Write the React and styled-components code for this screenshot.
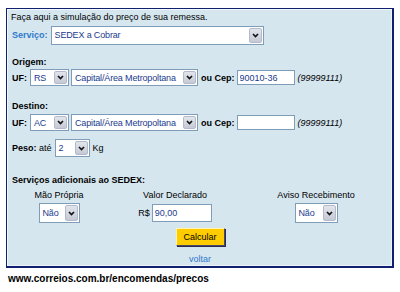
import React from 'react'
import styled, { createGlobalStyle } from 'styled-components'

const GlobalStyle = createGlobalStyle`
  body {
    margin: 0;
    background: #fff;
    font-family: "Liberation Sans", Arial, sans-serif;
    font-size: 9px;
    color: #000;
  }
`

const Chevron = () => (
  <svg width="7" height="5" viewBox="0 0 7 5">
    <path d="M1 1 L3.5 3.6 L6 1" fill="none" stroke="#111" strokeWidth="1.6" />
  </svg>
)

const Select = ({ value, w, h }) => (
  <SelectBox $w={w} $h={h}>
    <SelectValue>{value}</SelectValue>
    <ArrowBtn>
      <Chevron />
    </ArrowBtn>
  </SelectBox>
)

// linha UF / Capital / Cep, igual para origem e destino
const PlaceRow = ({ uf, cep, mt }) => (
  <Row $h={17} $mt={mt}>
    <Label $mr={1}>UF:</Label>
    <Select value={uf} w={39} h={17} />
    <Select value="Capital/Área Metropoltana" w={127} h={17} />
    <Label $ml={1}>ou Cep:</Label>
    <Input $w={58} readOnly value={cep} />
    <Hint>(99999111)</Hint>
  </Row>
)

const App = () => {
  return (
    <>
      <GlobalStyle />
      <Page>
        <Panel>
          <Row $h={14}>
            <Intro>Faça aqui a simulação do preço de sua remessa.</Intro>
          </Row>
          <Row $h={20} $mt={1} $gap={3}>
            <Label $color="#2f78cc">Serviço:</Label>
            <Select value="SEDEX a Cobrar" w={213} h={19} />
          </Row>

          <Row $h={14} $mt={10}>
            <Label>Origem:</Label>
          </Row>
          <PlaceRow uf="RS" cep="90010-36" />

          <Row $h={14} $mt={13}>
            <Label>Destino:</Label>
          </Row>
          <PlaceRow uf="AC" cep="" mt={1} />

          <Row $h={18} $mt={8} $gap={3}>
            <span>
              <Label>Peso:</Label> até
            </span>
            <Select value="2" w={35} h={18} />
            <span>Kg</span>
          </Row>

          <Row $h={14} $mt={16}>
            <Label>Serviços adicionais ao SEDEX:</Label>
          </Row>
          <Columns $h={14} $mt={1}>
            <span>Mão Própria</span>
            <span>Valor Declarado</span>
            <span>Aviso Recebimento</span>
          </Columns>
          <Columns $h={20} $mt={1}>
            <Select value="Não" w={41} h={20} />
            <Money>
              R$
              <Input $w={60} $h={18} readOnly value="90,00" />
            </Money>
            <Select value="Não" w={43} h={20} />
          </Columns>

          <Row $h={18} $mt={5} $center>
            <CalcButton>Calcular</CalcButton>
          </Row>
          <Row $h={12} $mt={7} $center>
            <BackLink href="#">voltar</BackLink>
          </Row>
        </Panel>
        <Footer>www.correios.com.br/encomendas/precos</Footer>
      </Page>
    </>
  )
}

export default App

const Page = styled.div`
  width: 400px;
  height: 292px;
  padding-top: 8px;
  box-sizing: border-box;
`

const Panel = styled.div`
  margin: 0 6px;
  display: flex;
  flex-direction: column;
  padding: 1px 4px 1px 5px;
  background: #d6e6ef;
  border: 1px solid #0f2070;
  border-right-width: 2px;
  border-bottom-width: 2px;
  box-shadow: inset 1px 1px 0 #f3f8fb, inset -1px -1px 0 #eef4f8;
`

const Row = styled.div`
  display: flex;
  align-items: center;
  justify-content: ${(p) => (p.$center ? 'center' : 'flex-start')};
  gap: ${(p) => p.$gap ?? 2}px;
  height: ${(p) => p.$h}px;
  margin-top: ${(p) => p.$mt || 0}px;
  white-space: nowrap;
`

const Columns = styled.div`
  display: grid;
  grid-template-columns: 94px 138px 1fr;
  justify-items: center;
  align-items: center;
  height: ${(p) => p.$h}px;
  margin-top: ${(p) => p.$mt || 0}px;
  white-space: nowrap;
`

const Intro = styled.span`
  margin-left: -1px;
`

const Label = styled.span`
  font-weight: bold;
  margin-left: ${(p) => p.$ml || 0}px;
  margin-right: ${(p) => p.$mr || 0}px;
  color: ${(p) => p.$color || '#000'};
`

const Hint = styled.span`
  font-style: italic;
  margin-left: 1px;
`

const SelectBox = styled.div`
  display: flex;
  align-items: stretch;
  box-sizing: border-box;
  width: ${(p) => p.$w}px;
  height: ${(p) => p.$h}px;
  padding: 1px;
  background: #fff;
  border: 1px solid #7f9db9;
`

const SelectValue = styled.span`
  flex: 1;
  display: flex;
  align-items: center;
  padding-left: 2px;
  overflow: hidden;
  letter-spacing: -0.15px;
  color: #1b3b8e;
`

const ArrowBtn = styled.span`
  width: 13px;
  flex-shrink: 0;
  display: flex;
  align-items: center;
  justify-content: center;
  box-sizing: border-box;
  border: 1px solid #b4bac8;
  border-radius: 2px;
  background: linear-gradient(#e2e5ec, #c5c9d5);
`

const Input = styled.input`
  box-sizing: border-box;
  width: ${(p) => p.$w}px;
  height: ${(p) => p.$h || 15}px;
  margin: 0;
  padding: 0 2px;
  border: 1px solid #7f9db9;
  background: #fff;
  font-family: "Liberation Sans", Arial, sans-serif;
  font-size: 9px;
  color: #1b3b8e;
  outline: none;
`

const Money = styled.div`
  display: flex;
  align-items: center;
  gap: 2px;
`

const CalcButton = styled.button`
  box-sizing: border-box;
  width: 49px;
  height: 18px;
  padding: 0;
  background: #ffcc00;
  border: 1px solid;
  border-color: #fff3b0 #4a4a66 #4a4a66 #fff3b0;
  box-shadow: 1px 1px 0 #2a2a50;
  font-family: "Liberation Sans", Arial, sans-serif;
  font-size: 9px;
  color: #000;
`

const BackLink = styled.a`
  color: #2f78cc;
  text-decoration: none;
`

const Footer = styled.div`
  margin-top: 5px;
  padding-left: 8px;
  height: 12px;
  line-height: 12px;
  font-size: 10px;
  font-weight: bold;
`
